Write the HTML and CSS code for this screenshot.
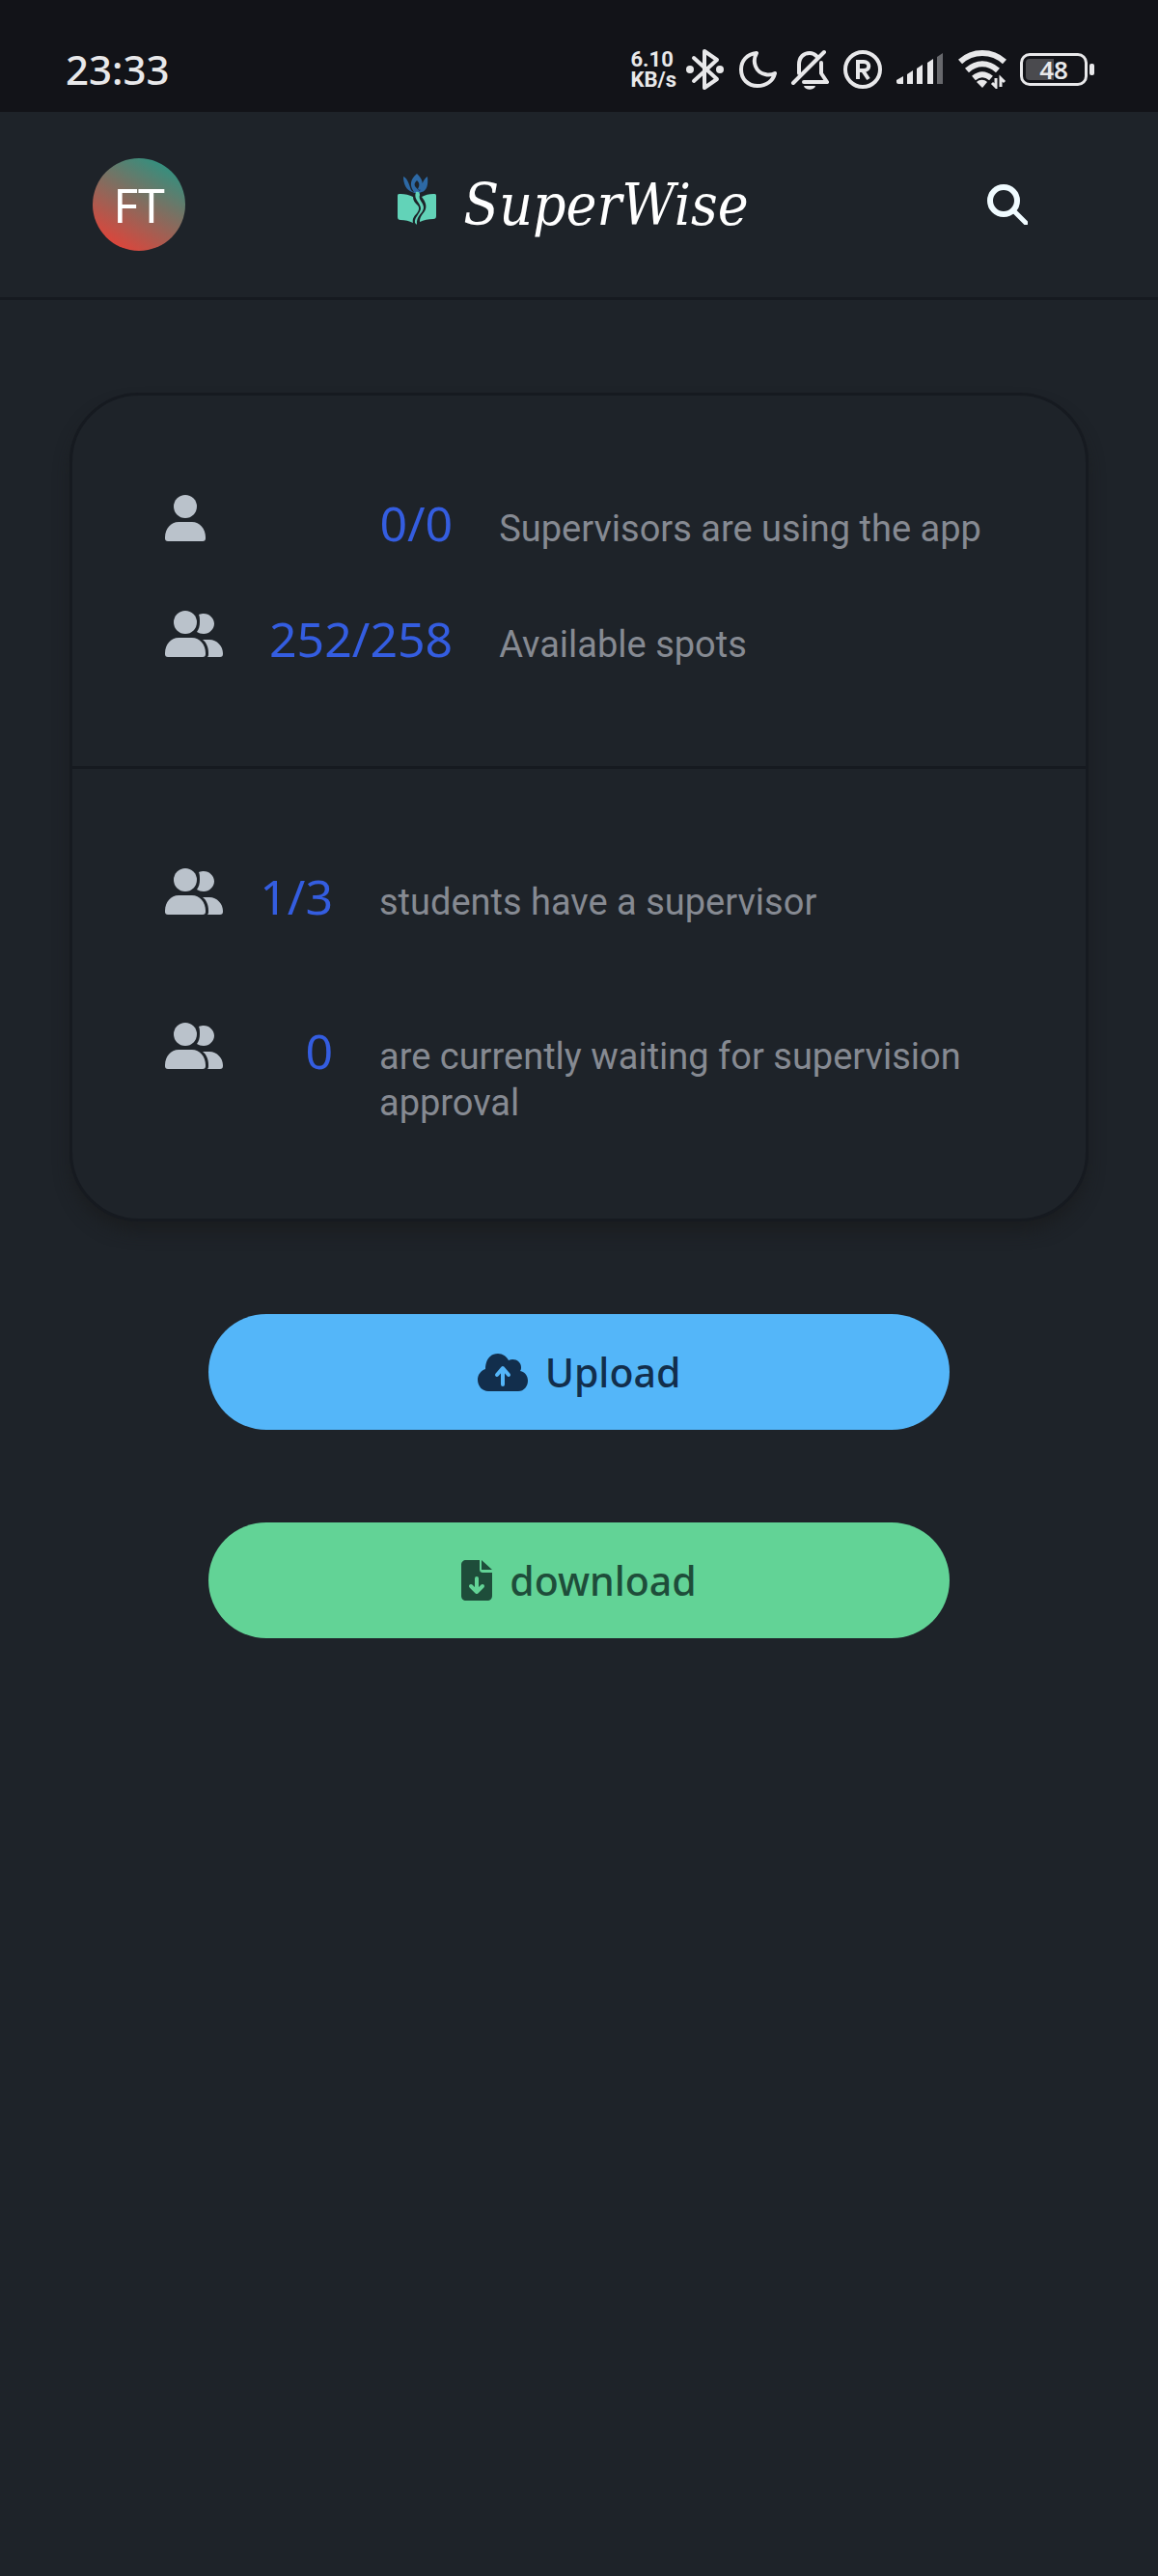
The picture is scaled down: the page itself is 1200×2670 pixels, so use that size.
FILE: index.html
```html
<!DOCTYPE html>
<html lang="en">
<head>
<meta charset="utf-8">
<meta name="viewport" content="width=device-width, initial-scale=1">
<title>SuperWise</title>
<link rel="stylesheet" href="styles.css">
</head>
<body>
<svg class="sprite" aria-hidden="true">
  <symbol id="person" viewBox="0 0 60 48">
    <ellipse cx="21" cy="12" rx="12" ry="12"/>
    <path d="M14 28h14c8 0 14 7 14 16v1c0 2-1 3-3 3H3c-2 0-3-1-3-3v-1c0-9 6-16 14-16z"/>
  </symbol>
  <symbol id="people" viewBox="0 0 60 48">
    <ellipse cx="21" cy="12" rx="12" ry="12"/>
    <path d="M14 28h14c8 0 14 7 14 16v1c0 2-1 3-3 3H3c-2 0-3-1-3-3v-1c0-9 6-16 14-16z"/>
    <path d="M35 4c2-1 4-1 5-1 6 0 11 5 11 10.500S46 24 40 24c-3 0-5-1-7-2 2-3 3-6 3-10 0-3 0-6-1-8z"/>
    <path d="M39 30h7c8 0 14 7 14 14v1c0 2-1 3-3 3H44c1-1 1-2 1-4 0-6-2-11-6-14z"/>
  </symbol>
</svg>

<div class="status-bar">
  <span class="clock">23:33</span>
  <div class="status-icons">
    <span class="net-speed"><span>6.10</span><span>KB/s</span></span>
    <svg width="40" height="44" viewBox="0 0 40 44" fill="none" stroke="currentColor" stroke-width="4" stroke-linecap="round" stroke-linejoin="round"><path d="M8 10l24 22-13 9V3l13 9L8 34"/><g fill="currentColor" stroke="none"><circle cx="4" cy="22" r="4"/><circle cx="35" cy="22" r="4"/></g></svg>
    <svg width="40" height="40" viewBox="0 0 40 40" fill="none" stroke="currentColor" stroke-width="4" stroke-linejoin="round"><path d="M19 3C9 4 3 11 3 20c0 10 7 17 17 17 9 0 16-5 18-13-4 2-7 2-10 1C18 23 14 12 19 3z"/></svg>
    <svg width="40" height="42" viewBox="0 0 40 42" fill="none" stroke="currentColor" stroke-width="4" stroke-linecap="round" stroke-linejoin="round"><path d="M3 35L35 3M9 25V16C9 8 14 4 20 4c3 0 5 1 7 3M32 14v11l6 9H14"/><path d="M14 38h12c-1 5-11 5-12 0z" fill="currentColor" stroke="none"/></svg>
    <svg width="42" height="42" viewBox="0 0 42 42" fill="none" stroke="currentColor" stroke-width="4"><circle cx="21" cy="21" r="18"/><path d="M16 31V13h6c7 0 7 9 0 9h-6M21 22l6 9"/></svg>
    <svg width="50" height="34" viewBox="0 0 50 34" fill="currentColor"><path d="M0 28l7-4v8H2c-1 0-2-1-2-2zM11 22l6-4v14h-6zM21 16l6-4v20h-6zM32 10l6-4v26h-6z"/><path d="M42 4l6-4v32h-6z" opacity=".4"/></svg>
    <svg width="50" height="40" viewBox="0 0 50 40" fill="none" stroke="currentColor" stroke-width="6"><path d="M2 12c13-12 33-12 46 0M9 21c10-9 22-9 32 0M16 29c6-5 12-5 18 0"/><path d="M19 33c3-3 8-3 11 0l-5 6z" stroke="none" fill="currentColor"/><path d="M39 29v9l-4-4M44 38v-9l4 4" stroke-width="3"/></svg>
    <span class="battery"><span class="battery-level">48</span></span>
  </div>
</div>

<header class="navbar">
  <button class="avatar" type="button" aria-label="Account">FT</button>
  <a class="brand" href="#">
    <svg width="64" height="64" viewBox="0 9 64 64" aria-hidden="true">
      <path fill="#2d69a5" d="M18 12c4 2 5 5 8 14 1 1 2 2 3 2-5-7-4-13 3-19 5 5 7 9 5 14l-2 3-2-1c2-4 2-6-1-9-4 4-3 6 3 11 2-5 3-12 8-15 1 9-1 15-6 16-2 1-3 1-5 1s-3 0-5-1c-6-2-9-8-9-16z"/>
      <path fill="#62d3b8" d="M12 32c0-2 1-2 3-2 5 0 9 1 13 3 0 4 2 6 5 9 2 3 1 5-1 8-3 3-5 6-4 10-4-2-8-3-13-3-2 0-3-1-3-3zM52 32c0-2-1-2-3-2-5 0-8 1-12 3 4 5 6 10 3 15-3 4-5 6-5 11 4-2 9-3 14-3 2 0 3-1 3-3z"/>
      <path fill="#62d3b8" d="M31 28c3-1 4 1 4 3-2 5 4 8 4 13 0 6-8 8-7 18l-2-2c-1-6 6-10 6-15 0-6-8-9-5-17z"/>
    </svg>
    <span>SuperWise</span>
  </a>
  <button class="search" type="button" aria-label="Search">
    <svg width="42" height="42" viewBox="0 0 42 42" fill="none" stroke="currentColor" stroke-linecap="round"><circle cx="17" cy="17" r="14" stroke-width="6"/><path d="M28 28l12 12" stroke-width="5"/></svg>
  </button>
</header>

<main class="content">
  <section class="card">
    <div class="stats">
      <svg class="icon" aria-hidden="true"><use href="#person"/></svg>
      <span class="value">0/0</span>
      <span class="label">Supervisors are using the app</span>
      <svg class="icon" aria-hidden="true"><use href="#people"/></svg>
      <span class="value">252/258</span>
      <span class="label">Available spots</span>
    </div>
    <div class="stats stats-students">
      <svg class="icon" aria-hidden="true"><use href="#people"/></svg>
      <span class="value">1/3</span>
      <span class="label">students have a supervisor</span>
      <svg class="icon" aria-hidden="true"><use href="#people"/></svg>
      <span class="value">0</span>
      <span class="label">are currently waiting for supervision approval</span>
    </div>
  </section>

  <div class="actions">
    <button class="btn btn-upload" type="button">
      <svg width="52" height="40" viewBox="0 0 52 40" aria-hidden="true"><path fill="currentColor" d="M11 40C5 40 0 35 0 28c0-5 3-9 8-11C8 7 13 1 21 1c5 0 9 3 11 7 6-3 13 1 13 7 0 1 0 3-1 4 5 1 8 5 8 10 0 6-4 11-10 11z"/><path class="arrow" d="M26 33V17m-6 6l6-7 6 7"/></svg>
      Upload
    </button>
    <button class="btn btn-download" type="button">
      <svg width="32" height="42" viewBox="0 0 32 42" aria-hidden="true"><path fill="currentColor" d="M5 0h14v9c0 3 1 4 4 4h9v24c0 3-2 5-5 5H5c-3 0-5-2-5-5V5c0-3 2-5 5-5zM21 0l11 10H21z"/><path class="arrow" d="M16 19v14m-6-6l6 6 6-6"/></svg>
      download
    </button>
  </div>
</main>
</body>
</html>
```
FILE: styles.css
```css
* {
  box-sizing: border-box;
}

body {
  margin: 0;
  min-height: 100vh;
  background: #1e2329;
  color: #ffffff;
  font-family: "Noto Sans", sans-serif;
}

button {
  border: 0;
  padding: 0;
  font: inherit;
  cursor: pointer;
}

svg {
  display: block;
  flex: none;
}

.sprite {
  display: none;
}

/* Device status bar */
.status-bar {
  display: flex;
  align-items: center;
  justify-content: space-between;
  height: 116px;
  padding: 28px 66px 0 68px;
  background: #121318;
  color: #e8e8ea;
}

.clock {
  font-size: 42px;
  font-weight: 500;
  line-height: 48px;
}

.status-icons {
  display: flex;
  align-items: center;
  gap: 14px;
}

.net-speed {
  display: grid;
  margin-right: -4px;
  font-family: Roboto, sans-serif;
  font-size: 22px;
  font-weight: 700;
  line-height: 21px;
}

.battery {
  display: flex;
  align-items: center;
  gap: 2px;
}

.battery::after {
  content: "";
  width: 5px;
  height: 12px;
  border-radius: 2px;
  background: currentColor;
}

.battery-level {
  width: 70px;
  height: 34px;
  border: 3px solid currentColor;
  border-radius: 10px;
  background: linear-gradient(90deg, #4a4a4e 50%, transparent 50%) content-box;
  padding: 3px;
  font-size: 26px;
  font-weight: 600;
  line-height: 22px;
  text-align: center;
}

/* App header */
.navbar {
  display: grid;
  grid-template-columns: 1fr auto 1fr;
  align-items: center;
  padding: 48px 96px;
  border-bottom: 3px solid #161a20;
}

.avatar {
  width: 96px;
  height: 96px;
  border-radius: 50%;
  background: linear-gradient(30deg, #dd453b 12%, #33907f 88%);
  color: #ffffff;
  font-size: 50px;
  line-height: 94px;
}

.brand {
  display: flex;
  align-items: center;
  gap: 16px;
  padding-right: 24px;
  color: #ffffff;
  font-family: "DejaVu Serif Condensed", "DejaVu Serif", serif;
  font-size: 60px;
  font-style: italic;
  line-height: 72px;
  text-decoration: none;
}

.search {
  display: grid;
  place-items: center;
  justify-self: end;
  width: 120px;
  height: 96px;
  background: none;
  color: #f0fbff;
}

/* Statistics card */
.content {
  padding: 96px 72px;
}

.card {
  border: 3px solid #161a20;
  border-radius: 72px;
  box-shadow: 0 12px 18px -3px rgba(26, 28, 30, 0.9);
  background: #1e2329;
}

.stats {
  display: grid;
  grid-template-columns: auto auto 1fr;
  align-items: baseline;
  gap: 48px;
  padding: 96px;
}

.stats-students {
  grid-template-columns: auto 66px 1fr;
  row-gap: 88px;
  padding-right: 72px;
  border-top: 3px solid #161a20;
}

.icon {
  width: 60px;
  height: 48px;
  fill: #bac2cb;
}

.value {
  justify-self: end;
  color: #345de0;
  font-size: 50px;
  line-height: 72px;
}

.label {
  color: #868a92;
  font-family: Roboto, "Noto Sans", sans-serif;
  font-size: 38px;
  line-height: 48px;
}

/* Action buttons */
.actions {
  display: grid;
  gap: 96px;
  padding: 96px 144px;
}

.btn {
  display: flex;
  align-items: center;
  justify-content: center;
  gap: 18px;
  height: 120px;
  border-radius: 60px;
  font-size: 41px;
  font-weight: 500;
}

.btn-upload {
  background: #54b6f9;
  color: #122e4c;
}

.btn-download {
  background: #62d396;
  color: #1e4d3a;
}

.arrow {
  fill: none;
  stroke-width: 4;
  stroke-linecap: round;
  stroke-linejoin: round;
}

.btn-upload .arrow {
  stroke: #54b6f9;
}

.btn-download .arrow {
  stroke: #62d396;
}
```
